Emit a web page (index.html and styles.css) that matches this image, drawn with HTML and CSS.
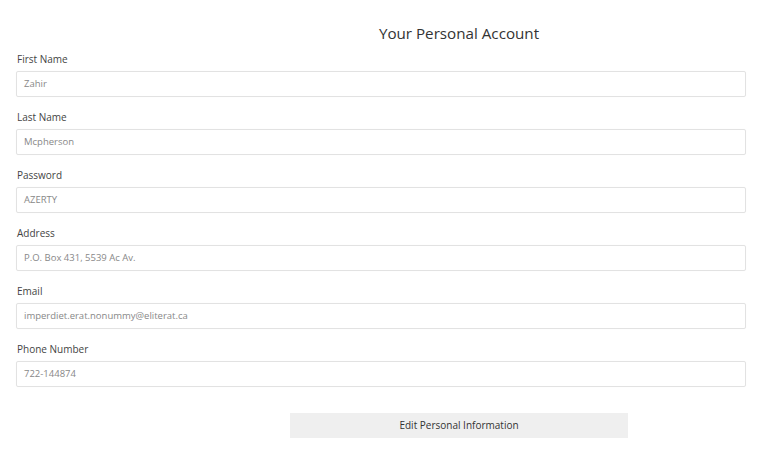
FILE: index.html
```html
<!DOCTYPE html>
<html>
<head>
<meta charset="utf-8">
<link rel="stylesheet" href="styles.css">
</head>
<body>
<div class="page">
  <h1 class="title">Your Personal Account</h1>
  <form class="form">
    <div class="field">
      <label class="label">First Name</label>
      <div class="input">Zahir</div>
    </div>
    <div class="field">
      <label class="label">Last Name</label>
      <div class="input">Mcpherson</div>
    </div>
    <div class="field">
      <label class="label">Password</label>
      <div class="input">AZERTY</div>
    </div>
    <div class="field">
      <label class="label">Address</label>
      <div class="input">P.O. Box 431, 5539 Ac Av.</div>
    </div>
    <div class="field">
      <label class="label">Email</label>
      <div class="input">imperdiet.erat.nonummy@eliterat.ca</div>
    </div>
    <div class="field">
      <label class="label">Phone Number</label>
      <div class="input">722-144874</div>
    </div>
    <div class="actions">
      <div class="button">Edit Personal Information</div>
    </div>
  </form>
</div>
</body>
</html>
```
FILE: styles.css
```css
html, body {
  margin: 0;
  padding: 0;
  background: #ffffff;
}
body {
  font-family: "Open Sans", "Noto Sans", sans-serif;
  color: #444;
}
.page {
  width: 730px;
  padding: 22px 0 0 16px;
}
.title {
  margin: 0 0 8px 156px;
  text-align: center;
  font-size: 15.2px;
  font-weight: 400;
  color: #333;
  line-height: 22px;
}
.form {
  display: flex;
  flex-direction: column;
}
.field {
  display: flex;
  flex-direction: column;
  margin-bottom: 13px;
}
.label {
  font-size: 10px;
  line-height: 14px;
  color: #444;
  padding-left: 1px;
  margin-bottom: 5px;
}
.input {
  height: 24px;
  border: 1px solid #e2e2e2;
  border-radius: 2px;
  font-size: 9.5px;
  line-height: 24px;
  color: #888;
  padding-left: 7px;
  box-shadow: 0 0 1px rgba(0,0,0,0.05);
}
.actions {
  display: flex;
  justify-content: center;
  padding-left: 156px;
  margin-top: 13px;
}
.button {
  width: 338px;
  height: 25px;
  background: #efefef;
  font-size: 10px;
  line-height: 25px;
  text-align: center;
  color: #333;
}
```
